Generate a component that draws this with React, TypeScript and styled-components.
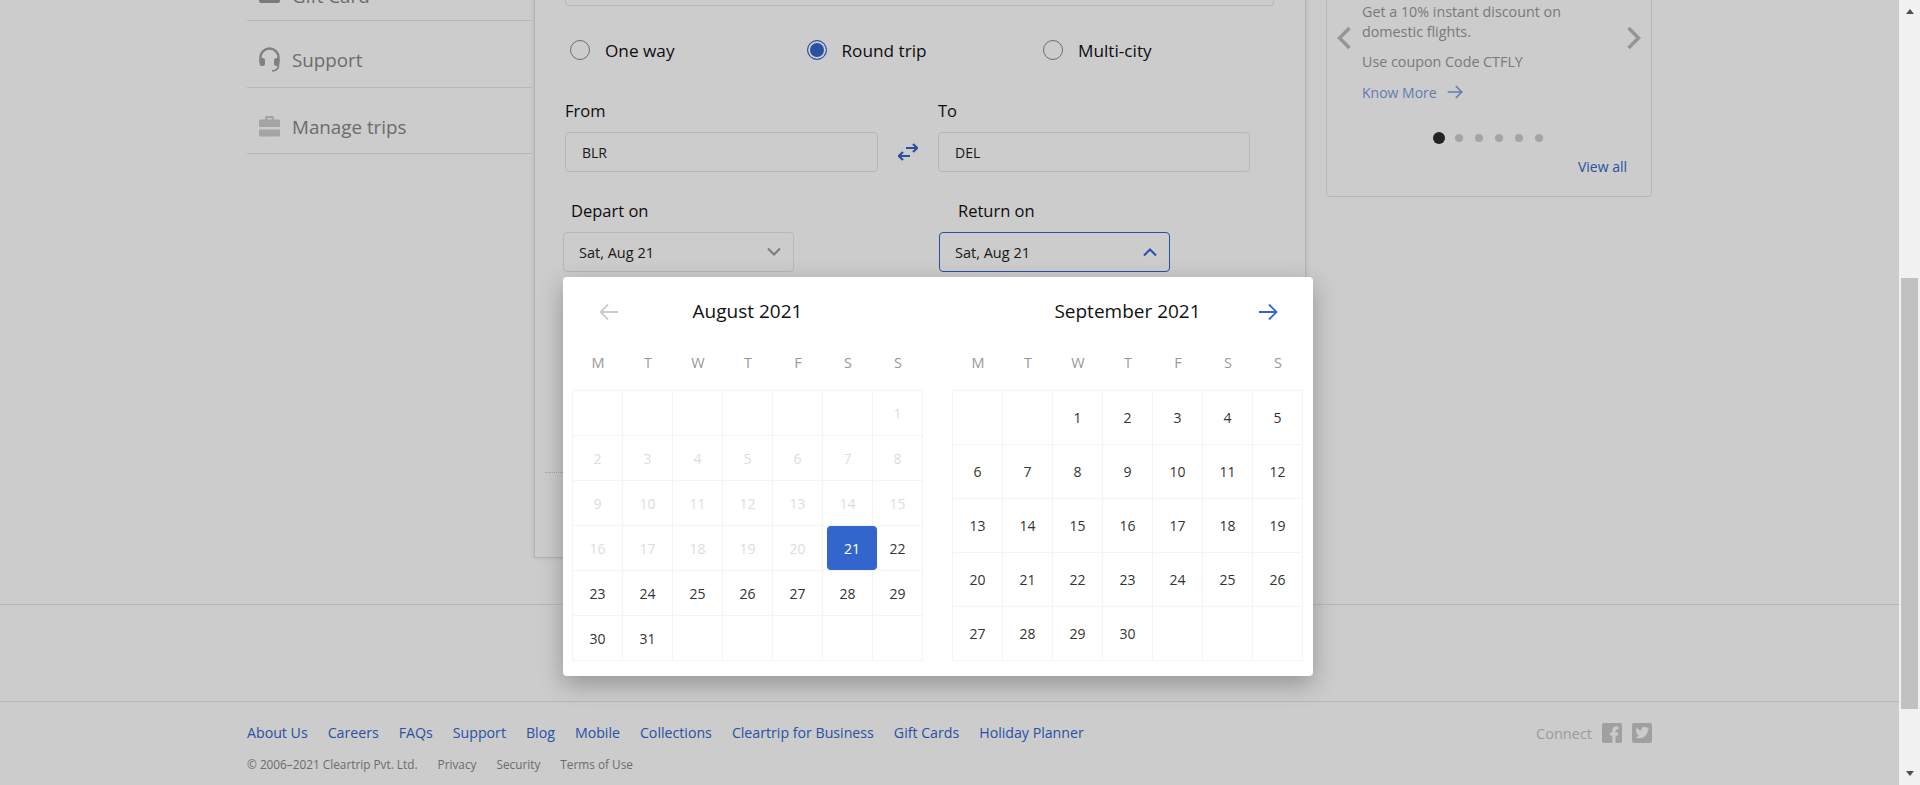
import React from 'react';
import styled, { createGlobalStyle } from 'styled-components';

const GlobalStyle = createGlobalStyle`
  html, body {
    margin: 0;
    height: 100%;
    overflow: hidden;
    background: #fff;
    font-family: "Open Sans", "Liberation Sans", sans-serif;
    color: #1a1a1a;
  }
`;

const PageFrame = styled.div`
  display: flex;
  width: 1920px;
  height: 785px;
`;

const Viewport = styled.div`
  position: relative;
  flex: 1;
  overflow: hidden;
`;

/* the page is scrolled down, so everything starts above the fold */
const Scrolled = styled.div`
  margin-top: -100px;
`;

const Columns = styled.div`
  display: flex;
  align-items: flex-start;
  padding-left: 247px;
  height: 705px;
  box-sizing: border-box;
  border-bottom: 1px solid #e6e6e6;
`;

const Sidebar = styled.nav`
  width: 285px;
  margin: 54px 2px 0 0;
`;

const NavRow = styled.a<{ $h?: number }>`
  display: flex;
  align-items: center;
  height: ${p => p.$h || 66}px;
  padding-left: 12px;
  border-bottom: 1px solid #e6e6e6;
  font-size: 18.8px;
  color: #888;
`;

const NavInner = styled.span<{ $top?: number }>`
  display: flex;
  align-items: center;
  gap: 12px;
  margin-top: ${p => p.$top || 11}px;
`;

const NavIcon = styled.svg`
  width: 21px;
  height: 25px;
  flex: none;
`;

const MainCard = styled.section`
  width: 772px;
  height: 658px;
  box-sizing: border-box;
  border: 1px solid #e2e2e2;
  border-top: 0;
  box-shadow: 0 0 4px rgba(0, 0, 0, 0.12);
  padding-left: 30px;
`;

const TopInput = styled.div`
  width: 709px;
  height: 106px;
  box-sizing: border-box;
  border: 1px solid #e6e6e6;
  border-top: 0;
  border-radius: 0 0 4px 4px;
`;

const RadioRow = styled.div`
  display: flex;
  margin: 32px 0 0 5px;
`;

const RadioItem = styled.label`
  display: flex;
  align-items: center;
  gap: 15px;
  width: 236.5px;
  height: 24px;
  font-size: 17.2px;
  font-weight: 500;
  color: #111;
`;

const RadioDot = styled.span<{ $on?: boolean }>`
  width: 20px;
  height: 20px;
  box-sizing: border-box;
  border-radius: 50%;
  border: 1px solid ${p => (p.$on ? '#3366cc' : '#888')};
  background: ${p => (p.$on ? '#3366cc' : '#fff')};
  box-shadow: ${p => (p.$on ? 'inset 0 0 0 2px #fff' : 'none')};
`;

const PlaceRow = styled.div`
  display: flex;
  align-items: flex-end;
  margin-top: 38px;
`;

const Field = styled.div<{ $w: number }>`
  width: ${p => p.$w}px;
`;

const FieldLabel = styled.div<{ $inset?: number }>`
  height: 20px;
  line-height: 21px;
  margin: 0 0 12px ${p => p.$inset || 0}px;
  font-size: 16.5px;
  font-weight: 500;
  color: #111;
`;

const TextBox = styled.div<{ $w: number }>`
  display: flex;
  align-items: center;
  width: ${p => p.$w}px;
  height: 40px;
  box-sizing: border-box;
  padding-left: 16px;
  border: 1px solid #e6e6e6;
  border-radius: 4px;
  font-size: 14px;
  color: #222;
`;

const SwapSlot = styled.div`
  display: flex;
  align-items: center;
  justify-content: center;
  width: 60px;
  height: 40px;
`;

const DateRow = styled.div`
  display: flex;
  margin: 28px 0 0 -2px;
`;

const DateField = styled.div<{ $w: number }>`
  width: ${p => p.$w}px;
`;

const DateBox = styled.div<{ $open?: boolean }>`
  display: flex;
  align-items: center;
  justify-content: space-between;
  width: 231px;
  height: 40px;
  box-sizing: border-box;
  padding: 0 11px 0 15px;
  border: 1px solid ${p => (p.$open ? '#3366cc' : '#e6e6e6')};
  border-radius: 4px;
  font-size: 14.5px;
  color: #222;
`;

const DottedRule = styled.div`
  width: 740px;
  margin: 200px 0 0 -20px;
  border-top: 1px dotted #ccc;
`;

const RightColumn = styled.aside`
  width: 326px;
  margin-left: 20px;
`;

const OfferCard = styled.div`
  position: relative;
  height: 297px;
  box-sizing: border-box;
  padding: 102px 0 0 35px;
  border: 1px solid #e6e6e6;
  border-top: 0;
  border-radius: 0 0 4px 4px;
`;

const OfferLine = styled.p<{ $gap?: number }>`
  margin: ${p => p.$gap || 0}px 0 0;
  font-size: 14.3px;
  line-height: 20px;
  color: #999;
`;

const KnowMore = styled.a`
  display: flex;
  align-items: center;
  gap: 10px;
  margin-top: 10px;
  height: 20px;
  font-size: 14px;
  color: #36c;
  opacity: 0.65;
`;

const OfferArrow = styled.svg<{ $side: 'left' | 'right' }>`
  position: absolute;
  top: 126px;
  ${p => p.$side}: 9px;
  width: 16px;
  height: 24px;
`;

const Dots = styled.div`
  display: flex;
  align-items: center;
  gap: 12px;
  margin: 26px 0 0 71px;
  height: 20px;
`;

const Dot = styled.span<{ $on?: boolean }>`
  width: ${p => (p.$on ? 12 : 8)}px;
  height: ${p => (p.$on ? 12 : 8)}px;
  margin-right: ${p => (p.$on ? -2 : 0)}px;
  border-radius: 50%;
  background: ${p => (p.$on ? '#2c2c2c' : '#cecece')};
`;

const ViewAll = styled.a`
  display: block;
  margin: 9px 24px 0 0;
  text-align: right;
  font-size: 14px;
  line-height: 20px;
  color: #36c;
`;

const Footer = styled.footer`
  margin-top: 96px;
  border-top: 1px solid #e6e6e6;
  padding: 19px 247px 0 247px;
`;

const FooterTop = styled.div`
  display: flex;
  justify-content: space-between;
  align-items: center;
  height: 22px;
`;

const LinkRow = styled.div<{ $gap: number; $down?: number }>`
  display: flex;
  align-items: center;
  gap: ${p => p.$gap}px;
  margin-top: ${p => p.$down || 0}px;
`;

const FooterLink = styled.a`
  font-size: 14.2px;
  letter-spacing: -0.01px;
  color: #36c;
`;

const LegalRow = styled.div`
  display: flex;
  gap: 20px;
  margin-top: 13px;
  font-size: 11.8px;
  line-height: 16px;
  color: #888;
`;

const Connect = styled.span`
  font-size: 14.5px;
  color: #c4c4c4;
`;

const SocialIcon = styled.svg`
  width: 20px;
  height: 20px;
  fill: #c8c8c8;
`;

const Backdrop = styled.div`
  position: absolute;
  inset: 0;
  background: rgba(0, 0, 0, 0.2);
`;

const Popover = styled.div`
  position: absolute;
  left: 563px;
  top: 277px;
  display: flex;
  gap: 29px;
  width: 750px;
  height: 399px;
  box-sizing: border-box;
  padding: 0 10px 0 9px;
  background: #fff;
  border-radius: 4px;
  box-shadow: 0 8px 24px rgba(0, 0, 0, 0.28);
`;

const Month = styled.div`
  width: 351px;
`;

const MonthHead = styled.div`
  display: flex;
  align-items: center;
  justify-content: center;
  position: relative;
  height: 67px;
  font-size: 19px;
  font-weight: 500;
  color: #111;
`;

const MonthArrow = styled.svg<{ $side: 'left' | 'right' }>`
  position: absolute;
  top: 25px;
  ${p => p.$side}: ${p => (p.$side === 'left' ? 27 : 25)}px;
  width: 20px;
  height: 20px;
  transform: ${p => (p.$side === 'left' ? 'scaleX(-1)' : 'none')};
`;

const WeekRow = styled.div`
  display: grid;
  grid-template-columns: repeat(7, 50px);
  align-items: center;
  height: 35px;
  padding: 1px 0 10px 1px;
  font-size: 14.5px;
  color: #999;
  text-align: center;
`;

const DayGrid = styled.div<{ $row: number }>`
  display: grid;
  grid-template-columns: repeat(7, 50px);
  grid-auto-rows: ${p => p.$row}px;
  width: 351px;
  box-sizing: border-box;
  border-top: 1px solid #f4f4f4;
  border-left: 1px solid #f4f4f4;
`;

const DayCell = styled.div<{ $off?: boolean }>`
  display: flex;
  align-items: center;
  justify-content: center;
  box-sizing: border-box;
  border-right: 1px solid #f4f4f4;
  border-bottom: 1px solid #f4f4f4;
  font-size: 14px;
  color: ${p => (p.$off ? '#ddd' : '#333')};
`;

const SelectedDay = styled.div`
  display: flex;
  align-items: center;
  justify-content: center;
  flex: none;
  width: 50px;
  height: 44px;
  margin-left: 9px;
  border-radius: 4px;
  background: #36c;
  color: #fff;
`;

const ScrollTrack = styled.div`
  display: flex;
  flex-direction: column;
  align-items: center;
  width: 21px;
  height: 785px;
  background: #f1f1f1;
`;

const ScrollThumb = styled.div`
  width: 17px;
  height: 431px;
  margin-top: auto;
  margin-bottom: 62px;
  background: #c1c1c1;
`;

const ScrollCaret = styled.div<{ $down?: boolean }>`
  width: 0;
  height: 0;
  margin: ${p => (p.$down ? '0 0 9px' : '9px 0 0')};
  border-left: 4px solid transparent;
  border-right: 4px solid transparent;
  ${p => (p.$down ? 'border-top: 5px solid #505050;' : 'border-bottom: 5px solid #505050;')}
`;

const Chevron = ({ up, color }: { up?: boolean; color: string }) => (
  <svg width="16" height="10" viewBox="0 0 16 10" fill="none" stroke={color} strokeWidth="2">
    <path d={up ? 'M2 8.5 L8 2.5 L14 8.5' : 'M2 1.5 L8 7.5 L14 1.5'} />
  </svg>
);

const ArrowPath = ({ color, width = 1.8 }: { color: string; width?: number }) => (
  <path d="M1 10 H18.5 M11 2.5 L18.5 10 L11 17.5" fill="none" stroke={color} strokeWidth={width} />
);

const august: (number | null)[] = [null, null, null, null, null, null, 1];
for (let d = 2; d <= 31; d++) august.push(d);
while (august.length < 42) august.push(null);

const september: (number | null)[] = [null, null];
for (let d = 1; d <= 30; d++) september.push(d);
while (september.length < 35) september.push(null);

const weekdays = ['M', 'T', 'W', 'T', 'F', 'S', 'S'];
const footerLinks = ['About Us', 'Careers', 'FAQs', 'Support', 'Blog', 'Mobile', 'Collections', 'Cleartrip for Business', 'Gift Cards', 'Holiday Planner'];

export default function App() {
  return (
    <>
      <GlobalStyle />
      <PageFrame>
        <Viewport>
          <Scrolled>
            <Columns>
              <Sidebar>
                <NavRow>
                  <NavInner $top={17}>
                    <NavIcon viewBox="0 0 21 25" fill="#999">
                      <path d="M2 4h17a2 2 0 0 1 2 2v4H0V6a2 2 0 0 1 2-2zM0 13h21v5a2 2 0 0 1-2 2H2a2 2 0 0 1-2-2z" />
                    </NavIcon>
                    Gift Card
                  </NavInner>
                </NavRow>
                <NavRow>
                  <NavInner>
                    <NavIcon viewBox="0 0 21 25">
                      <path d="M1.5 15V10.5a9 9 0 0 1 18 0V15" fill="none" stroke="#a0a0a0" strokeWidth="2.4" />
                      <rect x="0.5" y="11" width="5.5" height="8" rx="2.5" fill="#a0a0a0" />
                      <rect x="15" y="11" width="5.5" height="8" rx="2.5" fill="#a0a0a0" />
                      <path d="M19.5 18c0 3.5-2.5 5.8-6.5 5.8" fill="none" stroke="#a0a0a0" strokeWidth="1.7" />
                    </NavIcon>
                    Support
                  </NavInner>
                </NavRow>
                <NavRow $h={65}>
                  <NavInner $top={12}>
                    <NavIcon viewBox="0 0 21 25" fill="#cecece">
                      <path fillRule="evenodd" d="M6 5.5V3.5C6 2.7 6.7 2 7.5 2h6c.8 0 1.5.7 1.5 1.5v2h4.5c.8 0 1.5.7 1.5 1.500v6H0V7c0-.8.7-1.500 1.500-1.500H6zm2.500-1.500v1.500h4V4h-4z" />
                      <path d="M0 15.500h21v5.500c0 .8-.7 1.500-1.500 1.500h-18C.7 22.500 0 21.800 0 21z" />
                    </NavIcon>
                    Manage trips
                  </NavInner>
                </NavRow>
              </Sidebar>
              <MainCard>
                <TopInput />
                <RadioRow>
                  <RadioItem><RadioDot />One way</RadioItem>
                  <RadioItem><RadioDot $on />Round trip</RadioItem>
                  <RadioItem><RadioDot />Multi-city</RadioItem>
                </RadioRow>
                <PlaceRow>
                  <Field $w={313}>
                    <FieldLabel>From</FieldLabel>
                    <TextBox $w={313}>BLR</TextBox>
                  </Field>
                  <SwapSlot>
                    <svg width="20" height="18" viewBox="0 0 20 18" fill="none" stroke="#36c" strokeWidth="2.2">
                      <path d="M8 5H19M15 1l4.2 4L15 9" />
                      <path d="M12 13H1M5 9l-4.2 4L5 17" />
                    </svg>
                  </SwapSlot>
                  <Field $w={312}>
                    <FieldLabel>To</FieldLabel>
                    <TextBox $w={312}>DEL</TextBox>
                  </Field>
                </PlaceRow>
                <DateRow>
                  <DateField $w={376}>
                    <FieldLabel $inset={8}>Depart on</FieldLabel>
                    <DateBox>Sat, Aug 21<Chevron color="#999" /></DateBox>
                  </DateField>
                  <DateField $w={231}>
                    <FieldLabel $inset={19}>Return on</FieldLabel>
                    <DateBox $open>Sat, Aug 21<Chevron up color="#36c" /></DateBox>
                  </DateField>
                </DateRow>
                <DottedRule />
              </MainCard>
              <RightColumn>
                <OfferCard>
                  <OfferArrow $side="left" viewBox="0 0 16 24" fill="none" stroke="#bbb" strokeWidth="3.5">
                    <path d="M13.5 2 L3.5 12 L13.5 22" />
                  </OfferArrow>
                  <OfferArrow $side="right" viewBox="0 0 16 24" fill="none" stroke="#bbb" strokeWidth="3.5">
                    <path d="M2.5 2 L12.5 12 L2.5 22" />
                  </OfferArrow>
                  <OfferLine>Get a 10% instant discount on</OfferLine>
                  <OfferLine>domestic flights.</OfferLine>
                  <OfferLine $gap={10}>Use coupon Code CTFLY</OfferLine>
                  <KnowMore>
                    Know More
                    <svg width="16" height="16" viewBox="0 0 20 20"><ArrowPath color="#36c" width={2} /></svg>
                  </KnowMore>
                  <Dots>
                    <Dot $on /><Dot /><Dot /><Dot /><Dot /><Dot />
                  </Dots>
                  <ViewAll>View all</ViewAll>
                </OfferCard>
              </RightColumn>
            </Columns>
            <Footer>
              <FooterTop>
                <LinkRow $gap={20}>
                  {footerLinks.map(link => <FooterLink key={link}>{link}</FooterLink>)}
                </LinkRow>
                <LinkRow $gap={10} $down={2}>
                  <Connect>Connect</Connect>
                  <SocialIcon viewBox="0 0 20 20">
                    <path d="M2 0h16a2 2 0 0 1 2 2v16a2 2 0 0 1-2 2h-4.5v-7.5H16l.4-3h-2.9V7.8c0-.9.3-1.4 1.4-1.4h1.6V3.7c-.3 0-1.2-.1-2.3-.1-2.3 0-3.8 1.4-3.8 3.9v2H8v3h2.4V20H2a2 2 0 0 1-2-2V2a2 2 0 0 1 2-2z" />
                  </SocialIcon>
                  <SocialIcon viewBox="0 0 20 20">
                    <path fillRule="evenodd" d="M2 0h16a2 2 0 0 1 2 2v16a2 2 0 0 1-2 2H2a2 2 0 0 1-2-2V2a2 2 0 0 1 2-2zm14.5 5.2c-.5.2-1 .4-1.6.4.6-.3 1-.8 1.2-1.5-.5.3-1.100.6-1.800.7a2.800 2.800 0 0 0-4.800 2.600C7.700 7.300 5.600 6.200 4.300 4.500c-.8 1.300-.4 3 .9 3.800-.5 0-.9-.1-1.300-.3 0 1.300 1 2.500 2.300 2.800-.4.100-.8.100-1.300 0 .4 1.100 1.400 1.900 2.600 2-1.200.9-2.700 1.300-4.200 1.100 1.300.8 2.700 1.300 4.300 1.300 5.300 0 8.200-4.400 8.200-8.200v-.4c.6-.4 1.100-.9 1.500-1.400z" />
                  </SocialIcon>
                </LinkRow>
              </FooterTop>
              <LegalRow>
                <span>© 2006–2021 Cleartrip Pvt. Ltd.</span>
                <span>Privacy</span>
                <span>Security</span>
                <span>Terms of Use</span>
              </LegalRow>
            </Footer>
          </Scrolled>
          <Backdrop />
          <Popover>
            <Month>
              <MonthHead>
                <MonthArrow $side="left" viewBox="0 0 20 20">
                  <ArrowPath color="#ccc" />
                </MonthArrow>
                August 2021
              </MonthHead>
              <WeekRow>{weekdays.map((d, i) => <span key={i}>{d}</span>)}</WeekRow>
              <DayGrid $row={45}>
                {august.map((d, i) => (
                  <DayCell key={i} $off={d !== null && d < 21}>
                    {d === 21 ? <SelectedDay>21</SelectedDay> : d}
                  </DayCell>
                ))}
              </DayGrid>
            </Month>
            <Month>
              <MonthHead>
                September 2021
                <MonthArrow $side="right" viewBox="0 0 20 20">
                  <ArrowPath color="#36c" />
                </MonthArrow>
              </MonthHead>
              <WeekRow>{weekdays.map((d, i) => <span key={i}>{d}</span>)}</WeekRow>
              <DayGrid $row={54}>
                {september.map((d, i) => <DayCell key={i}>{d}</DayCell>)}
              </DayGrid>
            </Month>
          </Popover>
        </Viewport>
        <ScrollTrack>
          <ScrollCaret />
          <ScrollThumb />
          <ScrollCaret $down />
        </ScrollTrack>
      </PageFrame>
    </>
  );
}
